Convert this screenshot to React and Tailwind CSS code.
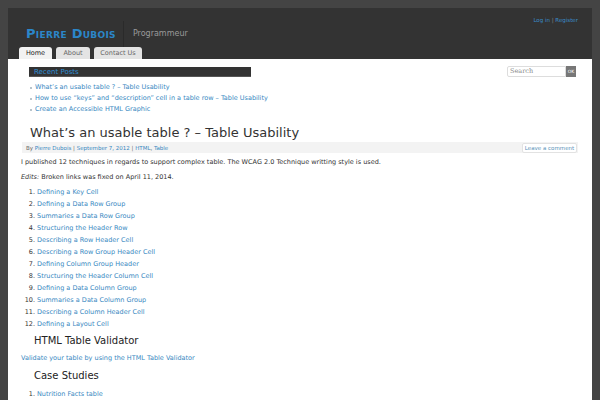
const items = [
  'Defining a Key Cell',
  'Defining a Data Row Group',
  'Summaries a Data Row Group',
  'Structuring the Header Row',
  'Describing a Row Header Cell',
  'Describing a Row Group Header Cell',
  'Defining Column Group Header',
  'Structuring the Header Column Cell',
  'Defining a Data Column Group',
  'Summaries a Data Column Group',
  'Describing a Column Header Cell',
  'Defining a Layout Cell',
];

const recent = [
  'What’s an usable table ? – Table Usability',
  'How to use “keys” and “description” cell in a table row – Table Usability',
  'Create an Accessible HTML Graphic',
];

export default function App() {
  return (
    <div
      className="w-[600px] h-[400px] overflow-hidden bg-[#444444] pt-[8px] pl-[8px]"
      style={{ fontFamily: '"DejaVu Sans", Verdana, sans-serif' }}
    >
      <div className="w-[584px]">
        {/* header */}
        <div className="h-[51px] bg-[#333333] relative">
          <div className="flex items-center pt-[15px] pl-[18px] h-[36px]">
            <span className="text-[#2b86c9] font-bold text-[13px] leading-[14px] tracking-[0.3px]" style={{ fontVariant: 'small-caps' }}>
              Pierre Dubois
            </span>
            <span className="ml-[7px] w-px h-[26px] bg-[#444] border-r border-[#2a2a2a]" />
            <span className="ml-[9px] text-[#9a9a9a] text-[8px] leading-[10px]">Programmeur</span>
          </div>
          <div className="absolute top-[8px] right-[14px] text-[5.5px] leading-[8px] text-[#3a8cc9]">
            Log in <span className="text-[#888]">|</span> Register
          </div>
          <div className="flex gap-[4px] pl-[11px] h-[15px] items-end">
            <div className="h-[12px] w-[33px] rounded-t-[3px] bg-[#f2f2f2] text-[#222] text-[6.5px] leading-[12px] text-center">Home</div>
            <div className="h-[12px] w-[34px] rounded-t-[3px] bg-[#e4e4e4] text-[#666] text-[6.5px] leading-[12px] text-center">About</div>
            <div className="h-[12px] w-[48px] rounded-t-[3px] bg-[#e4e4e4] text-[#666] text-[6.5px] leading-[12px] text-center">Contact Us</div>
          </div>
        </div>

        {/* content */}
        <div className="bg-white h-[341px] pt-[8px]">
          <div className="flex justify-between pr-[16px]">
            <div className="pl-[21px]">
              <div className="w-[222px] h-[10px] bg-[#333] border-b border-[#555] pl-[5px] text-[7px] leading-[10px] text-[#2f8fd6]">Recent Posts</div>
              <ul className="mt-[5px] pl-[1px]">
                {recent.map((r) => (
                  <li key={r} className="h-[11px] flex items-center text-[6.5px] leading-[11px] text-[#3788bf]">
                    <span className="w-[2px] h-[2px] bg-[#b8c4cc] mr-[3px] mt-[1px]" />
                    {r}
                  </li>
                ))}
              </ul>
            </div>
            <div className="flex h-[11px] mt-[-1px]">
              <div className="w-[59px] h-[11px] border border-[#ddd] rounded-l-[2px] text-[6.5px] leading-[9px] pl-[2px] text-[#888]" style={{ fontFamily: '"DejaVu Serif", serif' }}>
                Search
              </div>
              <div className="w-[10px] h-[11px] bg-[#777] text-white text-[4.5px] leading-[11px] text-center">OK</div>
            </div>
          </div>

          <h1 className="mt-[9px] pl-[22px] text-[13px] leading-[17px] text-[#333]">What’s an usable table ? – Table Usability</h1>

          <div className="mt-[1px] mx-[14px] h-[11px] bg-[#f3f3f3] flex items-center justify-between pl-[4px] pr-[1px]">
            <span className="text-[5.5px] leading-[8px] text-[#666]">
              By <span className="text-[#3788bf]">Pierre Dubois</span> | <span className="text-[#3788bf]">September 7, 2012</span> | <span className="text-[#3788bf]">HTML</span>, <span className="text-[#3788bf]">Table</span>
            </span>
            <span className="h-[10px] w-[55px] bg-white border border-[#e2e2e2] rounded-[2px] text-[5.5px] leading-[8px] text-center text-[#5a92b8]">Leave a comment</span>
          </div>

          <div className="pl-[13px] text-[6.5px] text-[#333]">
            <p className="mt-[3px] leading-[12px]">I published 12 techniques in regards to support complex table. The WCAG 2.0 Technique writting style is used.</p>
            <p className="mt-[3px] leading-[12px]"><em>Edits:</em> Broken links was fixed on April 11, 2014.</p>
            <ol className="mt-[3px]">
              {items.map((t, i) => (
                <li key={t} className="flex h-[12px] leading-[12px]">
                  <span className="w-[16px] text-right pr-[2px] text-[#333]">{i + 1}.</span>
                  <span className="text-[#3788bf]">{t}</span>
                </li>
              ))}
            </ol>
            <h2 className="mt-[4px] pl-[13px] text-[10px] leading-[14px] text-[#222]">HTML Table Validator</h2>
            <p className="mt-[6px] leading-[9px] text-[#3788bf]">Validate your table by using the HTML Table Validator</p>
            <h2 className="mt-[6px] pl-[13px] text-[10px] leading-[14px] text-[#222]">Case Studies</h2>
            <ol className="mt-[5px]">
              <li className="flex h-[12px] leading-[12px]">
                <span className="w-[16px] text-right pr-[2px] text-[#333]">1.</span>
                <span className="text-[#3788bf]">Nutrition Facts table</span>
              </li>
            </ol>
          </div>
        </div>
      </div>
    </div>
  );
}
